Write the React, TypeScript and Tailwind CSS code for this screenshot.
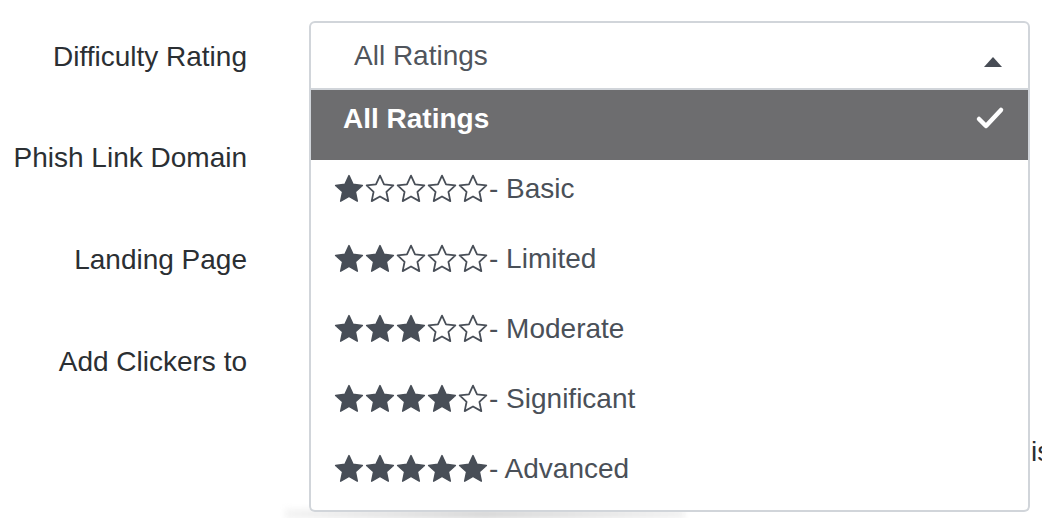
import React from 'react'

const ratings = [
  { stars: 1, label: 'Basic' },
  { stars: 2, label: 'Limited' },
  { stars: 3, label: 'Moderate' },
  { stars: 4, label: 'Significant' },
  { stars: 5, label: 'Advanced' },
]

function Star({ filled }: { filled: boolean }) {
  return (
    <svg width="30" height="30" viewBox="1 1 22 22" className="shrink-0">
      <polygon
        points="12,2.2 14.95,8.6 21.8,9.35 16.7,14.05 18.1,20.9 12,17.45 5.9,20.9 7.3,14.05 2.2,9.35 9.05,8.6"
        fill={filled ? '#484e57' : 'none'}
        stroke="#484e57"
        strokeWidth={filled ? 1.1 : 1.3}
        strokeLinejoin="round"
      />
    </svg>
  )
}

function Row({ label, children }: { label: string; children?: React.ReactNode }) {
  return (
    <div className="grid grid-cols-[248px_721px] gap-x-[61px] items-center h-[68px]">
      <div className="text-right text-[28px] text-[#2b2f33] pr-[1px] mt-[2px]">{label}</div>
      <div className="relative h-full">{children}</div>
    </div>
  )
}

export default function App() {
  return (
    <div
      className="w-[1042px] h-[518px] overflow-hidden bg-white pt-[21px]"
      style={{ fontFamily: '"Liberation Sans", Arial, sans-serif' }}
    >
      <div className="flex flex-col gap-[34px]">
        <Row label="Difficulty Rating">
          <div className="h-[69px] border-2 border-[#d1d5da] rounded-t-[6px] flex items-center justify-between pl-[43px] pr-[26px]">
            <span className="text-[28px] text-[#50555c]">All Ratings</span>
            <svg width="18" height="10" viewBox="0 0 18 10" className="mt-[12px]">
              <polygon points="9,0 18,10 0,10" fill="#474c55" />
            </svg>
          </div>
          <div className="absolute z-10 left-0 right-0 top-[69px] bg-white border-x-2 border-b-2 border-[#d1d5da] rounded-b-[6px]">
            <div className="h-[70px] bg-[#6d6d6f] flex items-center justify-between pl-[32px] pr-[23px] pb-[13px]">
              <span className="text-[28px] font-bold text-white">All Ratings</span>
              <svg width="30" height="24" viewBox="0 0 30 24" className="-mt-[2px]">
                <polyline
                  points="4,13 11,20 26,4"
                  fill="none"
                  stroke="#ffffff"
                  strokeWidth="4.5"
                  strokeLinecap="round"
                  strokeLinejoin="round"
                />
              </svg>
            </div>
            {ratings.map((r) => (
              <div key={r.label} className="h-[70px] flex items-center pl-[23px] pb-[12px]">
                <div className="flex items-center gap-[1px]">
                  {[0, 1, 2, 3, 4].map((i) => (
                    <Star key={i} filled={i < r.stars} />
                  ))}
                </div>
                <span className="text-[28px] text-[#4a5058] ml-[1px]">- {r.label}</span>
              </div>
            ))}
          </div>
        </Row>
        <Row label="Phish Link Domain" />
        <Row label="Landing Page" />
        <Row label="Add Clickers to" />
        <div className="h-[68px] flex items-start pl-[1031px] pt-[2px]">
          <span className="text-[28px] text-[#2b2f33] whitespace-nowrap">is</span>
        </div>
      </div>
      <div className="ml-[285px] mt-[12px] w-[400px] h-[10px] bg-gradient-to-r from-[#f4f4f4] via-[#d6d6d6] to-[#f2f2f2] blur-[3px]" />
    </div>
  )
}
